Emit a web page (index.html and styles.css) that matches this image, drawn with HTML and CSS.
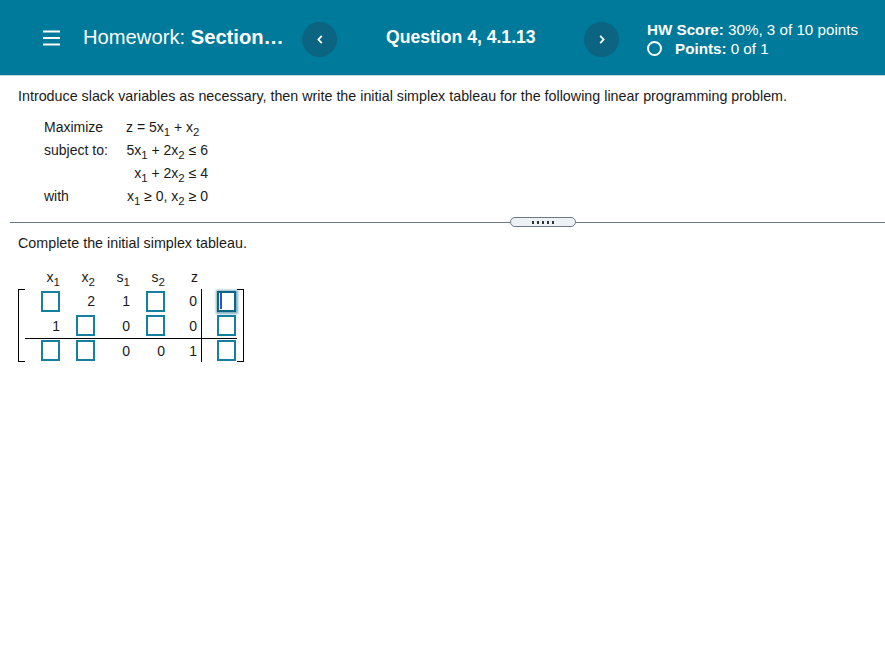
FILE: index.html
```html
<!DOCTYPE html>
<html lang="en">
<head>
<meta charset="utf-8">
<title>Homework: Section 4.1</title>
<link rel="stylesheet" href="styles.css">
</head>
<body>
<header class="topbar">
  <button class="menu" aria-label="Menu">
    <svg width="17" height="16" viewBox="0 0 17 16"><path d="M0 1.5h17M0 8h17M0 14.5h17" stroke="#fff" stroke-width="1.8" fill="none"/></svg>
  </button>
  <div class="title"><span class="t-label">Homework:</span> <span class="t-name">Section…</span></div>
  <button class="nav prev" aria-label="Previous question">
    <svg width="6" height="9" viewBox="0 0 6 9"><path d="M4.8 0.8L1.4 4.5l3.4 3.7" stroke="#fff" stroke-width="1.8" fill="none"/></svg>
  </button>
  <div class="qnum">Question 4, 4.1.13</div>
  <button class="nav next" aria-label="Next question">
    <svg width="6" height="9" viewBox="0 0 6 9"><path d="M1.2 0.8l3.4 3.7-3.4 3.7" stroke="#fff" stroke-width="1.8" fill="none"/></svg>
  </button>
  <div class="score">
    <div class="score-line"><b>HW Score:</b> 30%, 3 of 10 points</div>
    <div class="score-line pts"><span class="ring"></span><span><b>Points:</b> 0 of 1</span></div>
  </div>
</header>

<main class="content">
  <p class="intro">Introduce slack variables as necessary, then write the initial simplex tableau for the following linear programming problem.</p>

  <div class="problem">
    <span class="plabel">Maximize</span><span class="pexpr left">z = 5x<sub>1</sub> + x<sub>2</sub></span>
    <span class="plabel">subject to:</span><span class="pexpr">5x<sub>1</sub> + 2x<sub>2</sub> ≤ 6</span>
    <span class="plabel"></span><span class="pexpr">x<sub>1</sub> + 2x<sub>2</sub> ≤ 4</span>
    <span class="plabel">with</span><span class="pexpr">x<sub>1</sub> ≥ 0, x<sub>2</sub> ≥ 0</span>
  </div>
</main>

<div class="divider">
  <div class="rule rule-left"></div>
  <button class="pill" aria-label="Expand"><span></span><span></span><span></span><span></span><span></span></button>
  <div class="rule rule-right"></div>
</div>

<section class="content answer">
  <p class="prompt">Complete the initial simplex tableau.</p>

  <div class="tableau">
    <div class="tgrid thead">
      <span class="cell"><span>x<sub>1</sub></span></span>
      <span class="cell"><span>x<sub>2</sub></span></span>
      <span class="cell"><span>s<sub>1</sub></span></span>
      <span class="cell"><span>s<sub>2</sub></span></span>
      <span class="cell c5"><span>z</span></span>
      <span class="cell"></span>
    </div>
    <div class="matrix">
      <div class="brk brk-l"></div>
      <div class="tgrid tbody">
        <span class="cell"><span class="box"></span></span>
        <span class="cell">2</span>
        <span class="cell">1</span>
        <span class="cell"><span class="box"></span></span>
        <span class="cell c5 sep">0</span>
        <span class="cell rhs"><span class="box focus"><span class="caret"></span></span></span>

        <span class="cell">1</span>
        <span class="cell"><span class="box"></span></span>
        <span class="cell">0</span>
        <span class="cell"><span class="box"></span></span>
        <span class="cell c5 sep">0</span>
        <span class="cell rhs"><span class="box"></span></span>

        <span class="cell last"><span class="box"></span></span>
        <span class="cell last"><span class="box"></span></span>
        <span class="cell last">0</span>
        <span class="cell last">0</span>
        <span class="cell c5 sep last">1</span>
        <span class="cell rhs last"><span class="box"></span></span>
      </div>
      <div class="brk brk-r"></div>
    </div>
  </div>
</section>
</body>
</html>
```

FILE: styles.css
```css
* { box-sizing: border-box; }

body {
  margin: 0;
  background: #fff;
  color: #1a1a1a;
  font-family: "Liberation Sans", Arial, sans-serif;
}

button {
  font: inherit;
  border: 0;
  padding: 0;
  background: none;
  cursor: pointer;
}

/* ---------- top bar ---------- */
.topbar {
  height: 76px;
  background: #007a9a;
  border-bottom: 1px solid #c9d8e0;
  display: flex;
  align-items: center;
  padding-left: 43px;
  color: #fff;
}

.menu {
  width: 17px;
  height: 16px;
  display: flex;
  margin-top: 1px;
}

.title {
  margin-left: 23px;
  width: 201px;
  font-size: 20.2px;
  white-space: nowrap;
}
.t-name { font-weight: bold; }

.nav {
  width: 35px;
  height: 35px;
  border-radius: 50%;
  background: #0b6482;
  display: flex;
  align-items: center;
  justify-content: center;
  margin-top: 3px;
}
.prev { margin-left: 18px; }
.next { margin-left: 48px; }

.qnum {
  margin-left: 49px;
  width: 150px;
  font-size: 17.6px;
  font-weight: bold;
  white-space: nowrap;
}

.score {
  margin-left: 28px;
  font-size: 15.2px;
  line-height: 19px;
  margin-top: 2px;
  white-space: nowrap;
}
.pts {
  display: flex;
  align-items: center;
}
.ring {
  width: 15px;
  height: 15px;
  border: 2px solid #fff;
  border-radius: 50%;
  margin-right: 13px;
}

/* ---------- problem ---------- */
.content {
  padding-left: 18px;
}

.intro {
  margin: 11px 0 0;
  font-size: 14.3px;
  line-height: 18px;
}

.problem {
  margin: 10px 0 0 26px;
  display: grid;
  grid-template-columns: 82px 82px;
  grid-auto-rows: 23px;
  align-items: center;
  font-size: 14px;
}
.pexpr {
  text-align: right;
  white-space: nowrap;
}
.pexpr.left { text-align: left; }

sub {
  font-size: 0.82em;
  line-height: 0;
  vertical-align: -0.38em;
}

/* ---------- divider ---------- */
.divider {
  margin-top: 10px;
  padding-left: 10px;
  display: flex;
  align-items: center;
  height: 10px;
}
.rule {
  height: 1px;
  background: #6b7886;
}
.rule-left { width: 500px; }
.rule-right { flex: 1; }
.pill {
  width: 66px;
  height: 10px;
  border: 1px solid #6b7886;
  border-radius: 5px;
  background: #eef1f4;
  display: flex;
  align-items: center;
  justify-content: center;
  gap: 3px;
}
.pill span {
  width: 2px;
  height: 3px;
  background: #333;
}

/* ---------- answer ---------- */
.prompt {
  margin: 7px 0 0;
  font-size: 14.3px;
  line-height: 18px;
}

.tableau {
  margin-top: 13px;
  font-size: 14px;
}

.tgrid {
  display: grid;
  grid-template-columns: 38px 35px 35px 35px 34px 35px;
}

.thead {
  margin-left: 7px;
  height: 24px;
  align-items: center;
}

.cell {
  display: flex;
  align-items: center;
  justify-content: flex-end;
  padding-right: 3px;
  white-space: nowrap;
}
.cell.c5 { padding-right: 4px; }

.matrix {
  display: flex;
}

.brk {
  width: 7px;
  border-top: 1.5px solid #000;
  border-bottom: 1.5px solid #000;
}
.brk-l { border-left: 1.5px solid #000; }
.brk-r { border-right: 1.5px solid #000; }

.tbody {
  grid-template-rows: 24px 25px 24px;
}
.cell.sep { border-right: 1.5px solid #000; }
.cell.last { border-top: 1.5px solid #000; }
.cell.rhs { padding-right: 1px; }

.box {
  width: 19px;
  height: 21px;
  border: 2px solid #17809f;
  background: #fff;
  display: flex;
  align-items: center;
}
.box.focus {
  border-color: #0d6685;
  box-shadow: 0 0 2px 1.5px rgba(20, 110, 140, 0.55);
}
.caret {
  width: 1.5px;
  height: 16px;
  margin-left: 1px;
  background: #2f4fd0;
}
```
